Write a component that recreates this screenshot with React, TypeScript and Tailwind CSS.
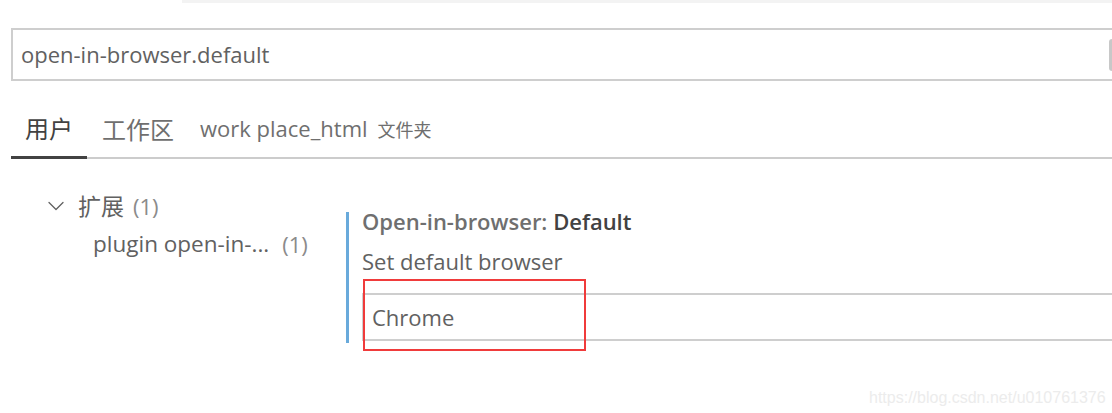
import { ChevronDown } from "lucide-react";

export default function App() {
  return (
    <div className="relative h-[413px] w-[1112px] overflow-hidden bg-white font-['Open_Sans','Noto_Sans_CJK_SC',sans-serif] text-[#616161]">
      <div className="ml-[182px] h-[3px] bg-[#f3f3f3]" />

      {/* search */}
      <div className="relative ml-[11px] mt-[25px] flex h-[53px] items-center border-2 border-r-0 border-[#cecece] pl-[8px] text-[22px]">
        open-in-browser.default
        <div className="absolute right-0 top-[9px] h-[32px] w-[3px] rounded-l bg-[#c8c8c8]" />
      </div>

      {/* tabs */}
      <div className="ml-[11px] flex h-[78px] items-end border-b-2 border-[#cccccc]">
        <div className="-mb-[2px] border-b-[3px] border-[#424242] px-[14px] pb-[12px] text-[24px] leading-[30px] text-[#424242]">
          用户
        </div>
        <div className="pb-[12px] pl-[15px] text-[24px] leading-[30px] text-[#6f6f6f]">工作区</div>
        <div className="flex items-baseline gap-[10px] pb-[12px] pl-[26px] leading-[30px] text-[#6f6f6f]">
          <span className="text-[22px]">work place_html</span>
          <span className="text-[18px]">文件夹</span>
        </div>
      </div>

      <div className="flex">
        {/* tree */}
        <div className="w-[346px] pl-[42px] pt-[32px]">
          <div className="flex h-[30px] items-center">
            <ChevronDown className="h-[28px] w-[28px] text-[#616161]" strokeWidth={1.1} />
            <span className="ml-[8px] text-[23px]">扩展</span>
            <span className="ml-[9px] text-[22px] text-[#8b8b8b]">(1)</span>
          </div>
          <div className="mt-[8px] flex h-[30px] items-center gap-[13px] pl-[51px] text-[22px]">
            <span className="text-[22.5px]">plugin open-in-...</span>
            <span className="text-[#8b8b8b]">(1)</span>
          </div>
        </div>

        {/* setting */}
        <div className="mt-[53px] h-[131px] flex-1 border-l-[3px] border-[#69aadb] pl-[13px]">
          <div className="text-[22px] font-semibold leading-[19px]">
            <span className="text-[#6f6f6f]">Open-in-browser: </span>
            <span className="text-[#424242]">Default</span>
          </div>
          <div className="mt-[18px] text-[22px] leading-[24px]">Set default browser</div>
          <div className="mt-[20px] flex h-[48px] items-center border-2 border-r-0 border-[#cecece] pl-[8px] text-[22px]">
            Chrome
          </div>
        </div>
      </div>

      <div className="absolute left-[363px] top-[279px] h-[72px] w-[223px] border-2 border-[#f03b3b]" />

      <div className="absolute left-[869px] top-[386px] font-['Liberation_Sans',sans-serif] text-[16px] text-[#ececec]">
        https://blog.csdn.net/u010761376
      </div>
    </div>
  );
}
